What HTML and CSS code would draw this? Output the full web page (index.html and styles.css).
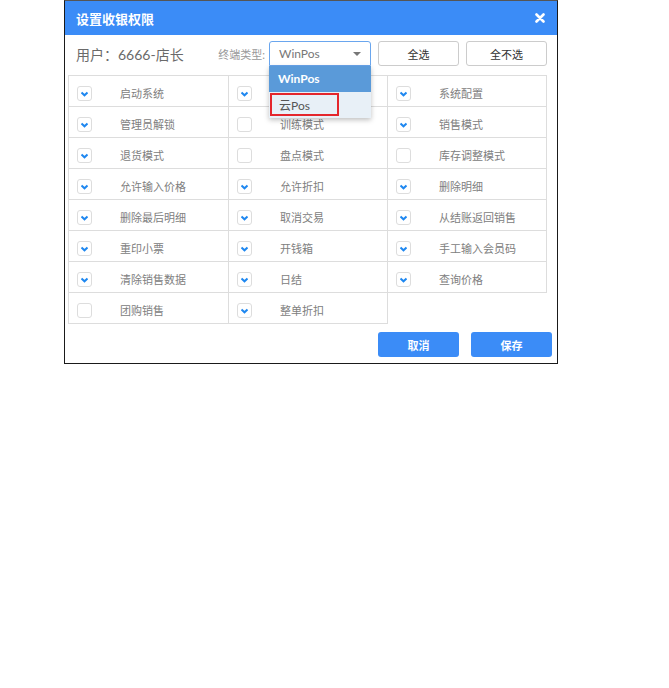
FILE: index.html
```
<!DOCTYPE html>
<html lang="zh-CN">
<head>
	<meta charset="UTF-8">
	<title>设置收银权限</title>
	<link rel="stylesheet" href="styles.css">
</head>
<body>
	<div class="dialog">
		<div class="head">
			<span class="title">设置收银权限</span>
			<svg class="close" width="10" height="10" viewBox="0 0 10 10"><path d="M1.5 1.5 L8.5 8.5 M8.5 1.5 L1.5 8.5" stroke="#fff" stroke-width="2.6" stroke-linecap="round"/></svg>
		</div>
		<div class="toolbar">
			<div class="user">用户：6666-店长</div>
			<span class="type">终端类型:</span>
			<div class="select">
				<span>WinPos</span>
				<i class="arrow"></i>
				<ul class="menu">
					<li class="on">WinPos</li>
					<li class="hover"><span>云Pos</span></li>
				</ul>
			</div>
			<button class="btn">全选</button>
			<button class="btn">全不选</button>
		</div>
		<div class="list">
			<div class="item"><i class="box checked"></i>启动系统</div>
			<div class="item"><i class="box checked"></i>收银权限</div>
			<div class="item"><i class="box checked"></i>系统配置</div>
			<div class="item"><i class="box checked"></i>管理员解锁</div>
			<div class="item"><i class="box"></i>训练模式</div>
			<div class="item"><i class="box checked"></i>销售模式</div>
			<div class="item"><i class="box checked"></i>退货模式</div>
			<div class="item"><i class="box"></i>盘点模式</div>
			<div class="item"><i class="box"></i>库存调整模式</div>
			<div class="item"><i class="box checked"></i>允许输入价格</div>
			<div class="item"><i class="box checked"></i>允许折扣</div>
			<div class="item"><i class="box checked"></i>删除明细</div>
			<div class="item"><i class="box checked"></i>删除最后明细</div>
			<div class="item"><i class="box checked"></i>取消交易</div>
			<div class="item"><i class="box checked"></i>从结账返回销售</div>
			<div class="item"><i class="box checked"></i>重印小票</div>
			<div class="item"><i class="box checked"></i>开钱箱</div>
			<div class="item"><i class="box checked"></i>手工输入会员码</div>
			<div class="item"><i class="box checked"></i>清除销售数据</div>
			<div class="item"><i class="box checked"></i>日结</div>
			<div class="item"><i class="box checked"></i>查询价格</div>
			<div class="item"><i class="box"></i>团购销售</div>
			<div class="item"><i class="box checked"></i>整单折扣</div>
		</div>
		<div class="foot">
			<button class="blue">取消</button>
			<button class="blue">保存</button>
		</div>
	</div>
</body>
</html>
```
FILE: styles.css
```
*{
	padding: 0;
	margin: 0;
	box-sizing: border-box;
}
body{
	background: #fff;
	font-family: "Lato", "Noto Sans CJK SC", sans-serif;
	color: #666;
}
.dialog{
	width: 494px;
	height: 364px;
	margin-left: 64px;
	border: 1px solid #1a1a1a;
	border-top-color: #555;
	background: #fff;
}
.head{
	height: 34px;
	background-color: #3b8cf7;
	display: flex;
	align-items: center;
	justify-content: space-between;
	padding: 0 12px 0 11px;
}
.title{
	color: #fff;
	font-size: 13px;
	font-weight: bold;
}
.close{
	display: block;
}
.toolbar{
	display: flex;
	align-items: center;
	height: 25px;
	margin: 6px 10px 0 11px;
}
.user{
	flex: 1;
	font-size: 14px;
	color: #6a6a6a;
}
.type{
	font-size: 11px;
	color: #999;
	margin-right: 4px;
}
.select{
	position: relative;
	width: 102px;
	height: 25px;
	border: 1px solid #6aa6ee;
	border-radius: 3px 3px 0 0;
	font-size: 12px;
	color: #777;
	display: flex;
	align-items: center;
	padding-left: 9px;
	margin-right: 7px;
}
.arrow{
	position: absolute;
	right: 9px;
	top: 10px;
	border-left: 4px solid transparent;
	border-right: 4px solid transparent;
	border-top: 4px solid #777;
}
.menu{
	list-style: none;
	position: absolute;
	left: -1px;
	top: 24px;
	width: 102px;
	background: #e8f0f7;
	box-shadow: 0 2px 5px rgba(0,0,0,0.25);
	z-index: 2;
}
.menu li{
	height: 26px;
	line-height: 26px;
	padding-left: 9px;
	font-size: 12px;
}
.menu li.on{
	background: #5a9ad9;
	color: #fff;
	font-weight: bold;
}
.menu li.hover{
	padding: 1px 0 0 1px;
	color: #555;
}
.menu li.hover span{
	display: block;
	width: 69px;
	height: 23px;
	line-height: 21px;
	padding-left: 7px;
	border: 2px solid #e4262c;
}
.btn{
	width: 81px;
	height: 25px;
	border: 1px solid #ccc;
	border-radius: 3px;
	background: #fff;
	font-family: inherit;
	font-size: 11px;
	color: #333;
}
.btn + .btn{
	margin-left: 7px;
}
.list{
	display: grid;
	grid-template-columns: 160px 159px 159px;
	grid-auto-rows: 31px;
	width: 479px;
	margin: 9px 0 0 3px;
}
.item{
	border: 1px solid #ddd;
	margin: 0 -1px -1px 0;
	display: flex;
	align-items: center;
	padding: 4px 0 0 8px;
	font-size: 11px;
	color: #808080;
}
.box{
	width: 15px;
	height: 15px;
	border: 1px solid #ddd;
	border-radius: 3px;
	margin-right: 28px;
	background: #fff;
}
.box.checked{
	background: #fff url("data:image/svg+xml,%3Csvg xmlns='http://www.w3.org/2000/svg' width='13' height='13'%3E%3Cpath d='M3.5 5.5 L6.5 8.3 L9.5 5.5' fill='none' stroke='%231e87f0' stroke-width='2'/%3E%3C/svg%3E") no-repeat center;
}
.foot{
	display: flex;
	justify-content: flex-end;
	margin: 9px 5px 0 0;
}
.blue{
	width: 81px;
	height: 25px;
	border: none;
	border-radius: 3px;
	background: #3b8cf7;
	color: #fff;
	font-family: inherit;
	font-size: 11px;
	font-weight: bold;
}
.blue + .blue{
	margin-left: 12px;
}
```
